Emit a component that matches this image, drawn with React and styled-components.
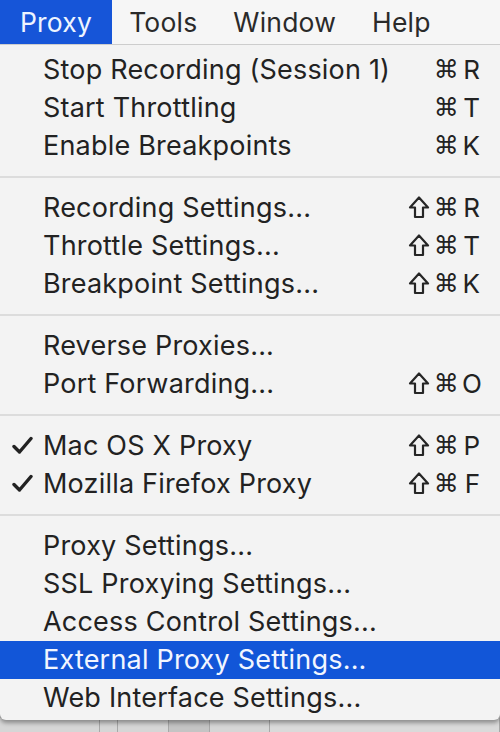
import React from "react";
import styled, { createGlobalStyle } from "styled-components";

const Global = createGlobalStyle`
  html, body { margin: 0; padding: 0; }
  body {
    width: 500px;
    height: 732px;
    overflow: hidden;
    background: #c9c9c9;
    font-family: Inter, "Liberation Sans", "DejaVu Sans", sans-serif;
  }
`;

const Screen = styled.div`
  width: 500px;
  height: 732px;
  display: flex;
  flex-direction: column;
  position: relative;
  background: linear-gradient(#d4d4d4, #bdbdbd);
`;

const BgStrip = styled.div`
  position: absolute;
  left: 0;
  right: 0;
  bottom: 0;
  height: 14px;
  display: flex;
  background: #d8d8d8;
`;

const BgSeg = styled.div`
  width: ${(p) => p.$w}px;
  border-right: 1px solid #a8a8a8;
  background: ${(p) => p.$bg || "#d6d6d6"};
`;

const MenuBar = styled.div`
  height: 44px;
  display: flex;
  align-items: stretch;
  background: #f6f6f6;
  border-bottom: 1px solid #cdcdcd;
  position: relative;
  z-index: 2;
`;

const BarItem = styled.div`
  display: flex;
  align-items: center;
  padding: 0 ${(p) => p.$pad}px 0 ${(p) => p.$padL}px;
  font-size: 26.5px;
  color: ${(p) => (p.$active ? "#eef4ff" : "#2a2a2a")};
  background: ${(p) => (p.$active ? "#1655d8" : "transparent")};
  letter-spacing: 0.2px;
`;

const Menu = styled.div`
  position: relative;
  z-index: 1;
  background: #f3f3f3;
  padding: 6px 0 3px;
  border-radius: 0 0 6px 6px;
  box-shadow: 0 3px 4px rgba(0, 0, 0, 0.35);
  display: flex;
  flex-direction: column;
`;

const Row = styled.div`
  height: 38px;
  display: flex;
  align-items: center;
  padding: 0 20px 1px 12px;
  box-sizing: border-box;
  font-size: 27px;
  letter-spacing: 0.2px;
  color: ${(p) => (p.$active ? "#f2f6ff" : "#222")};
  background: ${(p) => (p.$active ? "#1256d8" : "transparent")};
`;

const CheckSlot = styled.div`
  width: 31px;
  height: 37px;
  display: flex;
  align-items: center;
  flex-shrink: 0;
`;

const Label = styled.div`
  flex: 1;
  white-space: nowrap;
`;

const Shortcut = styled.div`
  display: flex;
  align-items: center;
  gap: 3px;
  font-size: 26px;
`;

const Glyph = styled.span`
  font-family: "DejaVu Sans", sans-serif;
  font-size: ${(p) => p.$size || 22}px;
  line-height: 1;
`;

const Key = styled.span`
  width: 18px;
  text-align: right;
  letter-spacing: 0;
`;

const Separator = styled.div`
  height: 24px;
  display: flex;
  align-items: center;
  &::after {
    content: "";
    flex: 1;
    height: 2px;
    background: #dcdcdc;
  }
`;

const Check = () => (
  <svg width="21" height="19" viewBox="0 0 21 19">
    <path
      d="M2 10.5 L7.5 16 L19 2.5"
      fill="none"
      stroke="#222"
      strokeWidth="3.4"
      strokeLinecap="round"
      strokeLinejoin="round"
    />
  </svg>
);

const Shift = () => (
  <svg width="22" height="23" viewBox="0 0 22 23" style={{ marginRight: 1 }}>
    <path
      d="M11 1.5 L20 11.5 L15 11.5 L15 21 L7 21 L7 11.5 L2 11.5 Z"
      fill="none"
      stroke="#262626"
      strokeWidth="2.2"
      strokeLinejoin="round"
    />
  </svg>
);

const groups = [
  [
    { label: "Stop Recording (Session 1)", key: "R" },
    { label: "Start Throttling", key: "T" },
    { label: "Enable Breakpoints", key: "K" },
  ],
  [
    { label: "Recording Settings...", key: "R", shift: true },
    { label: "Throttle Settings...", key: "T", shift: true },
    { label: "Breakpoint Settings...", key: "K", shift: true },
  ],
  [
    { label: "Reverse Proxies..." },
    { label: "Port Forwarding...", key: "O", shift: true },
  ],
  [
    { label: "Mac OS X Proxy", key: "P", shift: true, checked: true },
    { label: "Mozilla Firefox Proxy", key: "F", shift: true, checked: true },
  ],
  [
    { label: "Proxy Settings..." },
    { label: "SSL Proxying Settings..." },
    { label: "Access Control Settings..." },
    { label: "External Proxy Settings...", active: true },
    { label: "Web Interface Settings..." },
  ],
];

export default function App() {
  return (
    <Screen>
      <Global />
      <MenuBar>
        <BarItem $active $padL={20} $pad={20}>Proxy</BarItem>
        <BarItem $padL={17} $pad={19}>Tools</BarItem>
        <BarItem $padL={17} $pad={19}>Window</BarItem>
        <BarItem $padL={17} $pad={19}>Help</BarItem>
      </MenuBar>
      <Menu>
        {groups.map((g, gi) => (
          <React.Fragment key={gi}>
            {gi > 0 && <Separator />}
            {g.map((it) => (
              <Row key={it.label} $active={it.active}>
                <CheckSlot>{it.checked && <Check />}</CheckSlot>
                <Label>{it.label}</Label>
                {it.key && (
                  <Shortcut>
                    {it.shift && <Shift />}
                    <Glyph $size={25}>⌘</Glyph>
                    <Key>{it.key}</Key>
                  </Shortcut>
                )}
              </Row>
            ))}
          </React.Fragment>
        ))}
      </Menu>
      <BgStrip>
        <BgSeg $w={100} />
        <BgSeg $w={17} />
        <BgSeg $w={50} />
        <BgSeg $w={40} $bg="#c4c4c4" />
        <BgSeg $w={60} />
        <BgSeg $w={230} $bg="#dadada" />
      </BgStrip>
    </Screen>
  );
}
